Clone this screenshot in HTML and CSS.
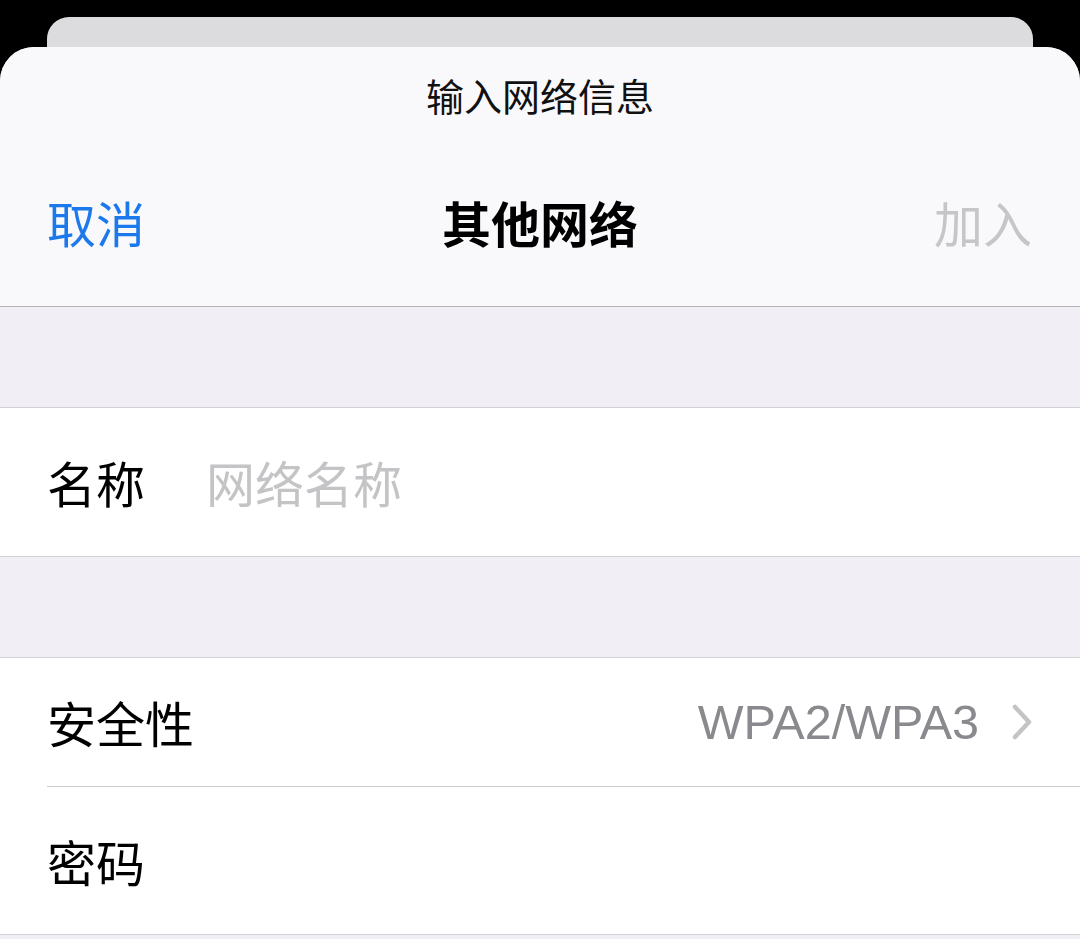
FILE: index.html
```html
<!DOCTYPE html>
<html lang="zh-CN">
<head>
<meta charset="utf-8">
<title>其他网络</title>
<link rel="stylesheet" href="styles.css">
</head>
<body>
<div class="back-card"></div>
<div class="sheet">
  <header class="header">
    <div class="prompt">输入网络信息</div>
    <nav class="nav">
      <span class="nav-btn cancel">取消</span>
      <span class="nav-title">其他网络</span>
      <span class="nav-btn join">加入</span>
    </nav>
  </header>
  <div class="spacer"></div>
  <section class="group">
    <div class="row row-name">
      <span class="label">名称</span>
      <span class="placeholder">网络名称</span>
    </div>
  </section>
  <div class="spacer"></div>
  <section class="group">
    <div class="row row-sec">
      <span class="label">安全性</span>
      <span class="value">WPA2/WPA3</span>
      <svg class="chev" width="20" height="36" viewBox="0 0 20 36"><polyline points="3,3 17,18 3,33" fill="none" stroke="#c4c4c7" stroke-width="4.5" stroke-linecap="round" stroke-linejoin="round"/></svg>
    </div>
    <div class="row row-pass">
      <span class="label">密码</span>
    </div>
  </section>
</div>
</body>
</html>
```
FILE: styles.css
```css
html, body {
  margin: 0;
  padding: 0;
  background: #000;
  height: 100%;
  overflow: hidden;
}
body {
  font-family: "Noto Sans CJK SC", "Liberation Sans", sans-serif;
  display: flex;
  flex-direction: column;
}
.back-card {
  margin: 17px 47px 0;
  height: 30px;
  flex: none;
  background: #dcdcde;
  border-radius: 22px 22px 0 0;
}
.sheet {
  flex: 1;
  background: #f1eff5;
  border-radius: 34px 34px 0 0;
  overflow: hidden;
}
.header {
  background: #f9f9fb;
  height: 259px;
  border-bottom: 1px solid #b4b4b8;
  display: flex;
  flex-direction: column;
}
.prompt {
  font-size: 38px;
  line-height: 50px;
  margin-top: 23px;
  text-align: center;
  color: #111;
}
.nav {
  margin-top: 77px;
  height: 50px;
  display: flex;
  align-items: center;
  justify-content: space-between;
  padding: 0 48px 0 47px;
  position: relative;
}
.nav-btn {
  font-size: 49px;
  line-height: 50px;
}
.cancel { color: #1c79ec; }
.join { color: #c6c6c8; }
.nav-title {
  position: absolute;
  left: 0;
  right: 0;
  text-align: center;
  font-size: 49px;
  line-height: 50px;
  font-weight: 700;
  color: #000;
}
.spacer {
  height: 100px;
  border-bottom: 1px solid #d1d1d5;
}
.group {
  background: #fff;
  border-bottom: 1px solid #d1d1d5;
}
.row {
  display: flex;
  align-items: center;
  padding: 0 50px 0 47px;
  font-size: 49px;
  color: #000;
}
.row-name { height: 148px; }
.row-sec {
  height: 128px;
  position: relative;
}
.row-sec::after {
  content: "";
  position: absolute;
  left: 47px;
  right: 0;
  bottom: -1px;
  height: 1px;
  background: #cfcfd3;
}
.row-pass {
  height: 147px;
  margin-top: 1px;
}
.label { line-height: 50px; }
.placeholder {
  margin-left: 61px;
  color: #c4c4c7;
  line-height: 50px;
}
.value {
  margin-left: auto;
  font-family: "Liberation Sans", sans-serif;
  font-size: 48.5px;
  color: #8a8a8e;
  line-height: 50px;
}
.chev {
  margin-left: 33px;
  margin-right: -2px;
  flex: none;
}
```
